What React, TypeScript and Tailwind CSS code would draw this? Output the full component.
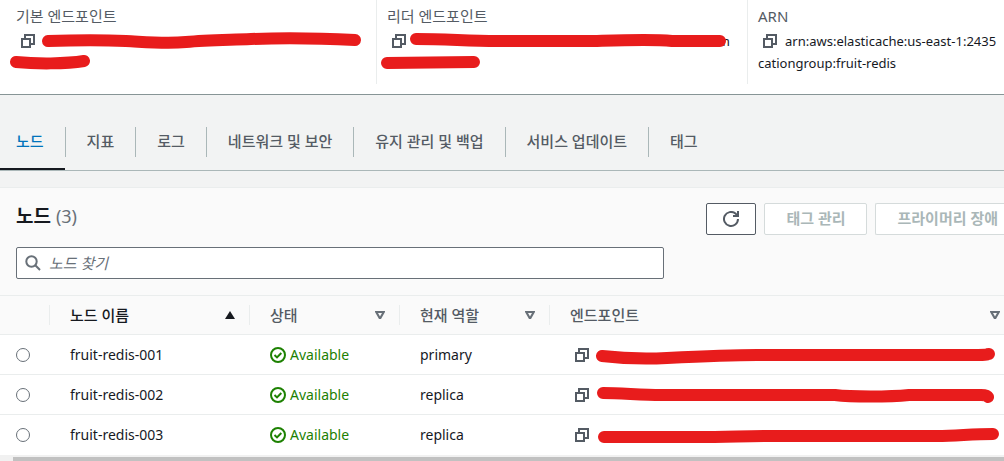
import type { ReactNode } from 'react';

const NODES = [
  {
    name: 'fruit-redis-001',
    role: 'primary',
    stroke: 'M5 11 C22 13 50 14 70 13 S130 10 160 10 S340 10 370 10 S386 9 392 9',
  },
  {
    name: 'fruit-redis-002',
    role: 'replica',
    stroke: 'M6 8 C24 8 44 10 64 10 L238 10 C254 12 292 12 312 10 L384 10 Q390 10 391 12',
  },
  {
    name: 'fruit-redis-003',
    role: 'replica',
    stroke: 'M7 12 L100 12 C130 12 150 11 180 11 L340 11 C360 11 374 9 396 9',
  },
];

const TABS = ['노드', '지표', '로그', '네트워크 및 보안', '유지 관리 및 백업', '서비스 업데이트', '태그'];

const CopyIcon = () => (
  <svg width="14" height="14" viewBox="0 0 14 14" fill="none" stroke="#545b64" strokeWidth="2" aria-hidden="true">
    <path d="M1 5h8v8H1z" />
    <path d="M4 5V1h9v9H9" />
  </svg>
);

const CopyButton = () => (
  <button type="button" aria-label="Copy" className="flex shrink-0 cursor-pointer">
    <CopyIcon />
  </button>
);

const Marker = ({ d }: { d: string }) => (
  <svg className="pointer-events-none absolute inset-0 h-full w-full overflow-visible" aria-hidden="true">
    <path d={d} fill="none" stroke="#e81c1c" strokeWidth="12" strokeLinecap="round" strokeLinejoin="round" />
  </svg>
);

const CheckIcon = () => (
  <svg width="16" height="16" viewBox="0 0 16 16" fill="none" stroke="#1d8102" strokeWidth="2" aria-hidden="true">
    <circle cx="8" cy="8" r="7" />
    <path d="M4.5 8l2.5 2.4 4.3-4.4" />
  </svg>
);

const SortIcon = ({ active = false }: { active?: boolean }) =>
  active ? (
    <svg width="10" height="8" viewBox="0 0 10 8" fill="#16191f" aria-hidden="true">
      <path d="M5 0l5 8H0z" />
    </svg>
  ) : (
    <svg width="10" height="8" viewBox="0 0 10 8" fill="#687078" fillRule="evenodd" aria-hidden="true">
      <path d="M0 0h10v1L6 8H4L0 1zM3 2l2 3.5L7 2z" />
    </svg>
  );

const Detail = ({ label, className = '', children }: { label: string; className?: string; children: ReactNode }) => (
  <div className={`h-[84px] overflow-hidden border-[#eaeded] pt-[5px] ${className}`}>
    <dt className="text-[15px] leading-[22px] text-[#545b64]">{label}</dt>
    <dd className="relative mt-[3px] leading-[22px]">{children}</dd>
  </div>
);

const HeaderCell = ({ label, active, className = '' }: { label: string; active?: boolean; className?: string }) => (
  <th scope="col" className="p-0">
    <div className="flex h-[38px] items-center">
      <span className="-ml-px h-5 w-px bg-[#eaeded]" />
      <button
        type="button"
        className={`flex flex-1 cursor-pointer items-center justify-between pl-5 text-[15px] font-medium leading-5 ${className} ${
          active ? 'text-[#16191f]' : 'text-[#545b64]'
        }`}
      >
        {label}
        <SortIcon active={active} />
      </button>
    </div>
  </th>
);

export default function App() {
  return (
    <main className="overflow-hidden bg-[#f2f3f3] font-['Noto_Sans','Noto_Sans_CJK_KR',sans-serif] text-[13px] text-[#16191f]">
      {/* Cluster details */}
      <dl className="grid grid-cols-[376fr_371fr_257fr] border-b border-[#879596] bg-white pb-[10px]">
        <Detail label="기본 엔드포인트" className="px-4">
          <div className="flex h-[22px] items-center gap-2 pl-[5px]">
            <CopyButton />
          </div>
          <Marker d="M32 11 C60 10 90 10 110 11 S150 14 170 12 S210 10 235 9 S300 8 339 10 M0 32 C20 34 50 34 68 31" />
        </Detail>
        <Detail label="리더 엔드포인트" className="border-l pl-[10px]">
          <div className="flex h-[22px] items-center gap-2 pl-[5px]">
            <CopyButton />
            <span className="ml-auto pr-[17px]">m</span>
          </div>
          <Marker d="M29 9 C60 9 80 11 110 11 L210 11 C240 10 265 9 285 11 L333 11 M0 33 L87 32" />
        </Detail>
        <Detail label="ARN" className="border-l pl-[10px]">
          <div className="flex h-[22px] items-center gap-2 pl-[5px] whitespace-nowrap">
            <CopyButton />
            arn:aws:elasticache:us-east-1:2435
          </div>
          cationgroup:fruit-redis
        </Detail>
      </dl>

      {/* Tabs */}
      <nav className="mt-6 flex border-b border-[#aab7b8]" role="tablist">
        {TABS.map((tab, i) => (
          <button
            key={tab}
            type="button"
            role="tab"
            aria-selected={i === 0}
            className={`flex cursor-pointer items-center border-b-2 pb-[11px] pt-2 text-[15px] font-medium ${
              i === 0 ? 'border-[#16191f] text-[#0073bb]' : 'border-transparent text-[#545b64]'
            }`}
          >
            <span
              className={`h-[30px] leading-7 ${i === 0 ? 'pl-4 pr-[21px]' : 'border-l border-[#aab7b8] px-[21px]'}`}
            >
              {tab}
            </span>
          </button>
        ))}
      </nav>

      {/* Node list */}
      <section className="mt-4 border-t border-[#eaeded] bg-[#fafafa]">
        <header className="flex items-start justify-between pl-4 pt-[15px]">
          <h2 className="text-[19px] font-bold leading-[26px]">
            노드 <span className="text-[18px] font-normal text-[#687078]">(3)</span>
          </h2>
          <div className="flex gap-2 text-[15px] font-bold leading-7 text-[#aab7b8]">
            <button
              type="button"
              aria-label="Refresh"
              className="flex h-8 w-[50px] cursor-pointer items-center justify-center rounded-[2px] border border-[#545b64] bg-white"
            >
              <svg width="16" height="16" viewBox="0 0 16 16" fill="none" stroke="#545b64" strokeWidth="2" aria-hidden="true">
                <path d="M15 8A7 7 0 1 1 12.5 2.6L14.5 4.6" />
                <path d="M10 5h5V0" />
              </svg>
            </button>
            <button type="button" disabled className="h-8 rounded-[2px] border border-[#d5dbdb] bg-white px-[21px] pb-[2px]">
              태그 관리
            </button>
            <button
              type="button"
              disabled
              className="h-8 rounded-l-[2px] border border-r-0 border-[#d5dbdb] bg-white pb-[2px] pl-[21px] pr-[6px]"
            >
              프라이머리 장애
            </button>
          </div>
        </header>

        <label className="mx-4 mt-3 flex h-8 max-w-[648px] items-center gap-2 rounded-[2px] border border-[#687078] bg-white px-2">
          <svg width="16" height="16" viewBox="0 0 16 16" fill="none" stroke="#687078" strokeWidth="2" aria-hidden="true">
            <circle cx="6.5" cy="6.5" r="5.2" />
            <path d="M10.3 10.3L15 15" />
          </svg>
          <input
            type="search"
            aria-label="노드 찾기"
            placeholder="노드 찾기"
            className="flex-1 text-[15px] italic outline-none placeholder:text-[#687078]"
          />
        </label>

        <table className="mt-4 w-full table-fixed border-collapse text-left text-[14px]">
          <colgroup>
            <col className="w-[50px]" />
            <col className="w-[200px]" />
            <col className="w-[150px]" />
            <col className="w-[150px]" />
            <col />
          </colgroup>
          <thead>
            <tr className="border-y border-[#eaeded]">
              <td />
              <HeaderCell label="노드 이름" active className="pr-[15px]" />
              <HeaderCell label="상태" className="pr-[15px]" />
              <HeaderCell label="현재 역할" className="pr-[15px]" />
              <HeaderCell label="엔드포인트" className="pr-1" />
            </tr>
          </thead>
          <tbody className="bg-white">
            {NODES.map((node) => (
              <tr key={node.name} className="h-10 border-b border-[#eaeded] last:border-0">
                <td className="pl-4">
                  <input
                    type="radio"
                    name="node"
                    aria-label={node.name}
                    className="block size-[14px] appearance-none rounded-full border border-[#687078] bg-white checked:border-4 checked:border-[#0073bb]"
                  />
                </td>
                <td className="pl-5">{node.name}</td>
                <td className="pl-5">
                  <span className="flex items-center gap-1 text-[#1d8102]">
                    <CheckIcon />
                    Available
                  </span>
                </td>
                <td className="pl-5">{node.role}</td>
                <td className="pl-[25px]">
                  <div className="flex items-center gap-2">
                    <CopyButton />
                    <div className="relative h-5 flex-1">
                      <Marker d={node.stroke} />
                    </div>
                  </div>
                </td>
              </tr>
            ))}
          </tbody>
        </table>
        <div className="h-[6px] bg-[#f1f1f1] pl-[13px] pt-[2px]">
          <div className="h-full bg-[#c1c1c1]" />
        </div>
      </section>
    </main>
  );
}
